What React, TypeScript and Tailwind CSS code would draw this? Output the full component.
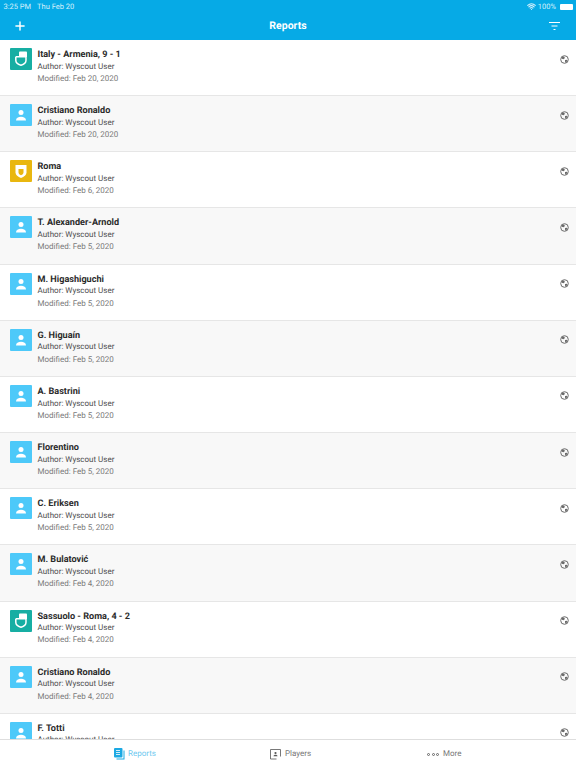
import { Plus, Wifi } from "lucide-react";

type Kind = "match" | "player" | "team";

const reports: { kind: Kind; title: string; date: string }[] = [
  { kind: "match", title: "Italy - Armenia, 9 - 1", date: "Feb 20, 2020" },
  { kind: "player", title: "Cristiano Ronaldo", date: "Feb 20, 2020" },
  { kind: "team", title: "Roma", date: "Feb 6, 2020" },
  { kind: "player", title: "T. Alexander-Arnold", date: "Feb 5, 2020" },
  { kind: "player", title: "M. Higashiguchi", date: "Feb 5, 2020" },
  { kind: "player", title: "G. Higuaín", date: "Feb 5, 2020" },
  { kind: "player", title: "A. Bastrini", date: "Feb 5, 2020" },
  { kind: "player", title: "Florentino", date: "Feb 5, 2020" },
  { kind: "player", title: "C. Eriksen", date: "Feb 5, 2020" },
  { kind: "player", title: "M. Bulatović", date: "Feb 4, 2020" },
  { kind: "match", title: "Sassuolo - Roma, 4 - 2", date: "Feb 4, 2020" },
  { kind: "player", title: "Cristiano Ronaldo", date: "Feb 4, 2020" },
  { kind: "player", title: "F. Totti", date: "Feb 4, 2020" },
];

function PlayerIcon() {
  return (
    <div className="flex h-[22px] w-[22px] shrink-0 items-center justify-center rounded-[1px] bg-[#4dc9f9]">
      <svg width="14" height="14" viewBox="0 0 14 14" fill="#fff">
        <circle cx="7" cy="4.500" r="2.500" />
        <path d="M2 12.500c0-2.400 2.200-3.700 5-3.700s5 1.300 5 3.700z" />
      </svg>
    </div>
  );
}

function MatchIcon() {
  return (
    <div className="flex h-[22px] w-[22px] shrink-0 items-center justify-center rounded-[1px] bg-[#17aea3]">
      <svg width="16" height="16" viewBox="0 0 16 16" fill="none">
        <path d="M2.800 5.800h9.700M13 5.500v3.700c0 2.800-2.500 4.300-5 5.100-2.700-.8-5.200-2.300-5.200-5.100V5.800" stroke="#fff" strokeWidth="1.500" />
        <path d="M6 1.500c0-.5.500-1 1-1h6c.5 0 1 .5 1 1v4.500H6z" fill="#fff" />
      </svg>
    </div>
  );
}

function TeamIcon() {
  return (
    <div className="flex h-[22px] w-[22px] shrink-0 items-center justify-center rounded-[1px] bg-[#e9b70f]">
      <svg width="14" height="15" viewBox="0 0 14 15" fill="none">
        <path d="M1.500 1h11v7.500c0 2.500-2.500 4.500-5.500 5.500-3-1-5.500-3-5.500-5.500z" fill="#fff" />
        <path d="M4.500 5h5v3.500c0 1.200-1.200 2.300-2.500 2.800-1.300-.5-2.500-1.600-2.500-2.800z" fill="#e9b70f" />
      </svg>
    </div>
  );
}

function Globe() {
  return (
    <svg width="9" height="9" viewBox="0 0 9 9" className="mt-[6.500px] shrink-0">
      <circle cx="4.500" cy="4.500" r="3.800" fill="none" stroke="#6b6b6b" strokeWidth="1" />
      <path d="M2 2l2.200-.6.700 1.600-1.300 1.300-1.800-.6zM5 5l2-.3.300 1.300-1.600 1.700-.7-1.300z" fill="#6b6b6b" />
    </svg>
  );
}

function Row({ kind, title, date, shaded }: { kind: Kind; title: string; date: string; shaded: boolean }) {
  return (
    <div className={`flex h-[56.17px] shrink-0 items-start border-b border-[#e6e6e6] pl-[10px] pr-[7.500px] pt-[8px] ${shaded ? "bg-[#f8f8f8]" : "bg-white"}`}>
      {kind === "match" && <MatchIcon />}
      {kind === "player" && <PlayerIcon />}
      {kind === "team" && <TeamIcon />}
      <div className="ml-[5.500px] flex-1 pt-[1px]">
        <div className="text-[9.100px] leading-[12px] font-bold text-[#2b2b2b]">{title}</div>
        <div className="mt-[-0.400px] text-[8px] leading-[12px] text-[#4d4d4d]">Author: Wyscout User</div>
        <div className="mt-[0.300px] text-[8px] leading-[12px] text-[#7a7a7a]">Modified: {date}</div>
      </div>
      <Globe />
    </div>
  );
}

export default function App() {
  return (
    <div className="relative flex h-[768px] w-[576px] flex-col overflow-hidden bg-white font-['Roboto',sans-serif] [text-rendering:geometricPrecision]">
      <header className="flex h-[40px] shrink-0 flex-col bg-[#06aae6] text-white">
        <div className="flex h-[12px] items-center justify-between pl-[3.500px] pr-[3px] pt-[1px] text-[7.500px] text-[#d5f0fb]">
          <div className="flex gap-[6px]">
            <span>3:25 PM</span>
            <span>Thu Feb 20</span>
          </div>
          <div className="flex items-center gap-[2px]">
            <Wifi size={9} strokeWidth={3} />
            <span>100%</span>
            <div className="ml-[2px] h-[6px] w-[13px] rounded-[1px] bg-white" />
          </div>
        </div>
        <div className="flex flex-1 items-center justify-between pl-[13px] pr-[16px] pb-[1px]">
          <Plus size={14} strokeWidth={2.500} />
          <span className="text-[10.500px] font-bold">Reports</span>
          <svg width="11" height="8" viewBox="0 0 11 8" stroke="#fff" strokeWidth="1">
            <path d="M0 .5h11M2.500 4h6M4.500 7.500h2" />
          </svg>
        </div>
      </header>

      <main className="flex flex-1 flex-col overflow-hidden">
        {reports.map((r, i) => (
          <Row key={i} kind={r.kind} title={r.title} date={r.date} shaded={i % 2 === 1} />
        ))}
      </main>

      <nav className="absolute bottom-0 left-0 flex h-[29px] w-full items-center border-t border-[#dedede] bg-white text-[8px]">
        <div className="flex w-[270px] items-center justify-center gap-[3px] text-[#6fc9ef]">
          <svg width="11" height="12" viewBox="0 0 11 12">
            <rect x="0" y="0" width="8.500" height="9.500" rx="1" fill="#1ba9e3" />
            <path d="M9.500 2.500h1v9h-8v-1h7z" fill="#1ba9e3" />
            <path d="M2 2.500h4M2 4.500h4M2 6.500h4" stroke="#fff" strokeWidth="0.800" />
          </svg>
          <span>Reports</span>
        </div>
        <div className="flex w-[44px] items-center gap-[4px] text-[#777]">
          <svg width="11" height="11" viewBox="0 0 11 11" fill="none" className="shrink-0">
            <path d="M6.500 10H.5V.5h10v7" stroke="#555" strokeWidth="0.800" />
            <circle cx="5.500" cy="4" r="1.100" fill="#555" />
            <path d="M3.500 7.300c0-1 1-1.500 2-1.500s2 .5 2 1.500z" fill="#555" />
          </svg>
          <span>Players</span>
        </div>
        <div className="ml-[113px] flex items-center gap-[4px] text-[#777]">
          <div className="flex gap-[1.500px]">
            <div className="h-[3px] w-[3px] rounded-full border border-[#666]" />
            <div className="h-[3px] w-[3px] rounded-full border border-[#666]" />
            <div className="h-[3px] w-[3px] rounded-full border border-[#666]" />
          </div>
          <span>More</span>
        </div>
      </nav>
    </div>
  );
}
